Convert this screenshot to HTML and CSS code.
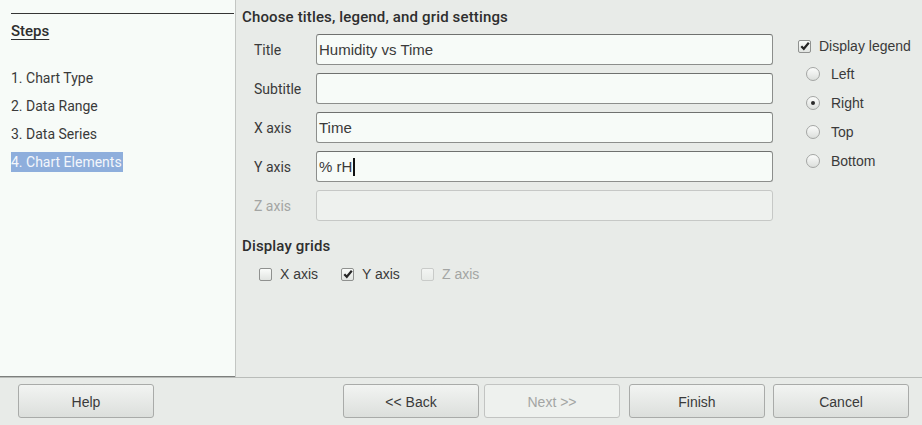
FILE: index.html
```html
<!DOCTYPE html>
<html>
<head>
<meta charset="utf-8">
<link rel="stylesheet" href="styles.css">
</head>
<body>
<div class="wizard">
  <div class="top">
    <aside class="sidebar">
      <div class="steps-title"><span>Steps</span></div>
      <ul class="steps">
        <li>1. Chart Type</li>
        <li>2. Data Range</li>
        <li>3. Data Series</li>
        <li><span class="current">4. Chart Elements</span></li>
      </ul>
    </aside>
    <main class="content">
      <h1 class="heading">Choose titles, legend, and grid settings</h1>
      <div class="row-area">
        <div class="form">
          <label class="lbl">Title</label>
          <div class="field"><span class="val">Humidity vs Time</span></div>
          <label class="lbl">Subtitle</label>
          <div class="field"></div>
          <label class="lbl">X axis</label>
          <div class="field"><span class="val">Time</span></div>
          <label class="lbl">Y axis</label>
          <div class="field"><span class="val">% rH</span><span class="caret"></span></div>
          <label class="lbl disabled">Z axis</label>
          <div class="field dis"></div>
        </div>
        <div class="legend">
          <div class="check-line">
            <span class="cbox"><svg viewBox="0 0 12 12" width="12" height="12"><path d="M2.3 6.2 L4.8 8.8 L9.8 2.8" fill="none" stroke="#262626" stroke-width="2.2"/></svg></span>
            <span class="ctext">Display legend</span>
          </div>
          <div class="radios">
            <div class="radio-line"><span class="radio"></span><span class="ctext">Left</span></div>
            <div class="radio-line"><span class="radio on"></span><span class="ctext">Right</span></div>
            <div class="radio-line"><span class="radio"></span><span class="ctext">Top</span></div>
            <div class="radio-line"><span class="radio"></span><span class="ctext">Bottom</span></div>
          </div>
        </div>
      </div>
      <h2 class="heading grids-h">Display grids</h2>
      <div class="grids">
        <div class="check-line g1"><span class="cbox"></span><span class="ctext">X axis</span></div>
        <div class="check-line g2"><span class="cbox"><svg viewBox="0 0 12 12" width="12" height="12"><path d="M2.3 6.2 L4.8 8.8 L9.8 2.8" fill="none" stroke="#262626" stroke-width="2.2"/></svg></span><span class="ctext">Y axis</span></div>
        <div class="check-line g3 off"><span class="cbox"></span><span class="ctext">Z axis</span></div>
      </div>
    </main>
  </div>
  <footer class="footer">
    <button class="btn">Help</button>
    <div class="spacer"></div>
    <div class="nav">
      <button class="btn">&lt;&lt; Back</button>
      <button class="btn off">Next &gt;&gt;</button>
    </div>
    <button class="btn finish">Finish</button>
    <button class="btn cancel">Cancel</button>
  </footer>
</div>
</body>
</html>
```
FILE: styles.css
```css
html, body {
  margin: 0;
  padding: 0;
}
body {
  width: 922px;
  height: 425px;
  background: #e8ebe8;
  font-family: "Liberation Sans", Arial, sans-serif;
  color: #3a3a3a;
  overflow: hidden;
}
.wizard {
  display: flex;
  flex-direction: column;
  height: 425px;
}
.top {
  display: flex;
  height: 377px;
  border-bottom: 1px solid #b9bcb9;
}
.sidebar {
  width: 236px;
  background: #f7fbf8;
  border-right: 1px solid #c3c6c3;
  padding: 13px 1px 0 11px;
  box-sizing: border-box;
  font-family: Roboto, "Liberation Sans", sans-serif;
  box-shadow: inset 0 -1px 0 #7d7f7d;
}
.steps-title {
  border-top: 1px solid #353535;
  padding-top: 8px;
  font-size: 15px;
  font-weight: 500;
  color: #2e2e2e;
  line-height: 18px;
}
.steps-title span {
  text-decoration: underline;
  text-underline-offset: 3px;
}
.steps {
  list-style: none;
  margin: 24px 0 0 0;
  padding: 0;
  font-size: 14px;
  color: #3a3a3a;
}
.steps li {
  height: 28px;
  line-height: 28px;
}
.current {
  display: inline-block;
  background: #8eaedc;
  color: #f3f6fb;
  line-height: 20px;
  padding-right: 1px;
}
.content {
  flex: 1;
  padding: 8px 0 0 6px;
  box-sizing: border-box;
}
.heading {
  margin: 0;
  font-family: Roboto, "Liberation Sans", sans-serif;
  font-size: 15px;
  font-weight: 500;
  color: #2e2e2e;
  line-height: 18px;
  letter-spacing: 0.15px;
}
.row-area {
  display: flex;
  margin-top: 8px;
  padding-left: 12px;
}
.form {
  display: grid;
  grid-template-columns: 62px 457px;
  grid-auto-rows: 31px;
  row-gap: 8px;
}
.lbl {
  font-family: Roboto, "Liberation Sans", sans-serif;
  font-size: 14px;
  color: #3a3a3a;
  align-self: center;
}
.lbl.disabled {
  color: #a3a5a3;
}
.field {
  background: #f7fbf8;
  border: 1px solid #8c8e8c;
  border-top-color: #6f716f;
  border-radius: 3px;
  box-sizing: border-box;
  display: flex;
  align-items: center;
  padding-left: 2px;
  font-size: 15px;
  color: #3a3a3a;
}
.field.dis {
  background: #eef1ee;
  border-color: #c6c8c6;
}
.caret {
  display: inline-block;
  width: 2px;
  height: 18px;
  background: #111;
  margin-left: 1px;
}
.legend {
  margin-left: 25px;
  padding-top: 3px;
}
.check-line {
  display: flex;
  align-items: center;
  height: 18px;
}
.cbox {
  width: 13px;
  height: 13px;
  box-sizing: border-box;
  border: 1px solid #8f918f;
  border-radius: 2px;
  background: linear-gradient(#fafcfa, #e1e4e1);
  display: inline-flex;
  align-items: center;
  justify-content: center;
}
.cbox svg {
  display: block;
  margin: -1px -1px 0 0;
}
.ctext {
  font-size: 14px;
  color: #3a3a3a;
  margin-left: 8px;
}
.radios {
  margin-top: 10px;
  padding-left: 8px;
  display: flex;
  flex-direction: column;
  gap: 11px;
}
.radio-line {
  display: flex;
  align-items: center;
  height: 18px;
}
.radio {
  width: 14px;
  height: 14px;
  box-sizing: border-box;
  border-radius: 50%;
  border: 1px solid #a4a6a4;
  background: linear-gradient(#fbfcfb, #dcdfdc);
  display: inline-flex;
  align-items: center;
  justify-content: center;
}
.radio.on::after {
  content: "";
  width: 4px;
  height: 4px;
  border-radius: 50%;
  background: #2a2a2a;
}
.radio-line .ctext {
  margin-left: 11px;
}
.grids-h {
  margin-top: 16px;
}
.grids {
  display: flex;
  margin-top: 10px;
  padding-left: 17px;
}
.grids .ctext {
  margin-left: 8px;
}
.g1 { width: 82px; }
.g2 { width: 80px; }
.off .cbox {
  border-color: #c9cbc9;
  background: linear-gradient(#f3f5f3, #e7eae7);
}
.off .ctext {
  color: #a3a5a3;
}
.footer {
  display: flex;
  align-items: flex-start;
  padding: 6px 13px 0 18px;
}
.spacer {
  flex: 1;
}
.nav {
  display: flex;
  gap: 5px;
  margin-right: 9px;
}
.btn {
  width: 136px;
  height: 34px;
  box-sizing: border-box;
  border: 1px solid #a9aba9;
  border-radius: 3px;
  background: linear-gradient(#f2f4f2, #dcdfdc);
  font-family: "Liberation Sans", Arial, sans-serif;
  font-size: 14px;
  color: #3a3a3a;
  padding: 1px 0 0 0;
}
.btn.off {
  background: #eef1ee;
  border-color: #c2c4c2;
  color: #a3a5a3;
}
.finish {
  margin-right: 8px;
}
```
